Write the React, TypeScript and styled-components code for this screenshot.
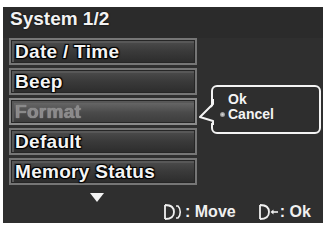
import React from "react";
import styled, { createGlobalStyle } from "styled-components";

const Global = createGlobalStyle`
  html, body { margin: 0; padding: 0; background: #ffffff; }
  body { font-family: "Liberation Sans", Arial, sans-serif; }
`;

const Screen = styled.div`
  position: relative;
  margin: 7px 3px 0 3px;
  width: 320px;
  height: 216px;
  background: #2f2f2f;
  display: flex;
  flex-direction: column;
  box-sizing: border-box;
`;

const Title = styled.div`
  height: 32px;
  padding: 1px 0 0 7px;
  box-sizing: border-box;
  font-size: 19px;
  line-height: 22px;
  font-weight: bold;
  color: #f2f2f2;
  background: #2b2b2b;
  text-shadow: 0 0 2px #000;
`;

const Menu = styled.div`
  display: flex;
  flex-direction: column;
  gap: 3px;
  padding: 0 0 0 6px;
  width: 188px;
`;

const Item = styled.div<{ $disabled?: boolean }>`
  height: 27px;
  box-sizing: border-box;
  border: 2px solid ${(p) => (p.$disabled ? "#8a8a8a" : "#767676")};
  box-shadow: inset 0 0 0 1px #262626, inset 2px 2px 0 1px #585858;
  background: ${(p) =>
    p.$disabled
      ? "linear-gradient(#6e6e6e, #4a4a4a 55%, #3c3c3c)"
      : "linear-gradient(#4e4e4e, #3a3a3a 50%, #2c2c2c)"};
  display: flex;
  align-items: center;
  padding-left: 4px;
  font-size: 19px;
  letter-spacing: 0.3px;
  font-weight: bold;
  color: ${(p) => (p.$disabled ? "#8a8a8a" : "#f4f4f4")};
  text-shadow: ${(p) =>
    p.$disabled
      ? "0 0 1px #b8b8b8"
      : "1px 1px 1px #000, -1px -1px 1px #000, 1px -1px 1px #000, -1px 1px 1px #000"};
`;

const More = styled.div`
  display: flex;
  justify-content: center;
  width: 188px;
  padding: 8px 0 0 0;
`;

const Footer = styled.div`
  margin-top: auto;
  height: 20px;
  display: flex;
  align-items: center;
  padding: 0 0 1px 160px;
  gap: 22px;
`;

const Hint = styled.div`
  display: flex;
  align-items: center;
  gap: 2px;
  font-size: 16px;
  font-weight: bold;
  color: #f0f0f0;
`;

const Popup = styled.div`
  position: absolute;
  left: 208px;
  top: 78px;
  width: 110px;
  height: 49px;
  box-sizing: border-box;
  border: 2px solid #f4f4f4;
  border-radius: 6px;
  background: #2e2e2e;
  padding: 5px 0 0 15px;
  display: flex;
  flex-direction: column;
`;

const Pointer = styled.svg`
  position: absolute;
  left: -14px;
  top: 12px;
`;

const Option = styled.div`
  position: relative;
  font-size: 14px;
  font-weight: bold;
  color: #f4f4f4;
  line-height: 15px;
`;

const Bullet = styled.span`
  position: absolute;
  left: -8px;
  top: 5px;
  width: 5px;
  height: 5px;
  border-radius: 50%;
  background: radial-gradient(#d8d8d8, #707070);
`;

const items = ["Date / Time", "Beep", "Format", "Default", "Memory Status"];

export default function App() {
  return (
    <>
      <Global />
      <Screen>
        <Title>System 1/2</Title>
        <Menu>
          {items.map((t) => (
            <Item key={t} $disabled={t === "Format"}>
              {t}
            </Item>
          ))}
        </Menu>
        <More>
          <svg width="14" height="9" viewBox="0 0 14 9">
            <polygon points="0,0 14,0 7,9" fill="#f4f4f4" />
          </svg>
        </More>
        <Footer>
          <Hint>
            <svg width="20" height="16" viewBox="0 0 20 16">
              <path
                d="M2 1 V15 M2 1 C9 1 11 4 11 8 C11 12 9 15 2 15"
                fill="none"
                stroke="#f0f0f0"
                strokeWidth="1.8"
              />
              <path
                d="M13 2 H15 C18 5 18 11 15 14 H13"
                fill="none"
                stroke="#f0f0f0"
                strokeWidth="1.6"
              />
            </svg>
            <span>: Move</span>
          </Hint>
          <Hint>
            <svg width="20" height="16" viewBox="0 0 20 16">
              <path
                d="M2 1 V15 M2 1 C9 1 11 4 11 8 C11 12 9 15 2 15"
                fill="none"
                stroke="#f0f0f0"
                strokeWidth="1.8"
              />
              <path d="M14 8 H20" stroke="#f0f0f0" strokeWidth="1.6" />
              <polygon points="12.5,8 15.5,5.5 15.5,10.5" fill="#f0f0f0" />
            </svg>
            <span>: Ok</span>
          </Hint>
        </Footer>
        <Popup>
          <Pointer width="16" height="26" viewBox="0 0 16 26">
            <polygon points="16,0 16,26 2,18 16,5" fill="#2e2e2e" />
            <polyline
              points="14,0 14,5 1,18 14,22 14,26"
              fill="none"
              stroke="#f4f4f4"
              strokeWidth="2"
              strokeLinejoin="round"
            />
          </Pointer>
          <Option>Ok</Option>
          <Option>
            <Bullet />
            Cancel
          </Option>
        </Popup>
      </Screen>
    </>
  );
}
